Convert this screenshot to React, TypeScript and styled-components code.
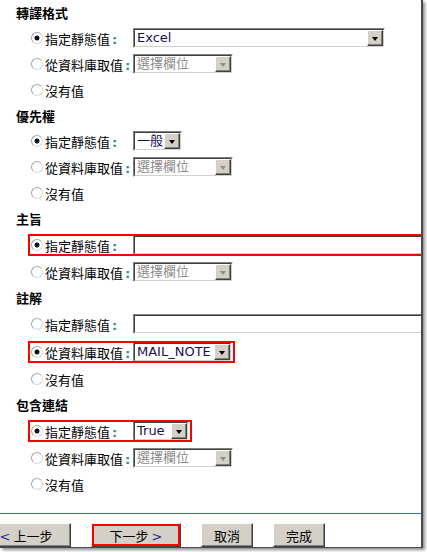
import styled, { createGlobalStyle } from "styled-components";

type Control =
  | { kind: "select"; value: string; width: number }
  | { kind: "pick" }
  | { kind: "text" };

type Option = {
  label: string;
  checked?: boolean;
  mark?: boolean;
  control?: Control;
};

type Section = { title: string; options: Option[] };

const sections: Section[] = [
  {
    title: "轉譯格式",
    options: [
      { label: "指定靜態值", checked: true, control: { kind: "select", value: "Excel", width: 252 } },
      { label: "從資料庫取值", control: { kind: "pick" } },
      { label: "沒有值" },
    ],
  },
  {
    title: "優先權",
    options: [
      { label: "指定靜態值", checked: true, control: { kind: "select", value: "一般", width: 49 } },
      { label: "從資料庫取值", control: { kind: "pick" } },
      { label: "沒有值" },
    ],
  },
  {
    title: "主旨",
    options: [
      { label: "指定靜態值", checked: true, mark: true, control: { kind: "text" } },
      { label: "從資料庫取值", control: { kind: "pick" } },
    ],
  },
  {
    title: "註解",
    options: [
      { label: "指定靜態值", control: { kind: "text" } },
      { label: "從資料庫取值", checked: true, mark: true, control: { kind: "select", value: "MAIL_NOTE", width: 99 } },
      { label: "沒有值" },
    ],
  },
  {
    title: "包含連結",
    options: [
      { label: "指定靜態值", checked: true, mark: true, control: { kind: "select", value: "True", width: 56 } },
      { label: "從資料庫取值", control: { kind: "pick" } },
      { label: "沒有值" },
    ],
  },
];

function Dropdown({ value, width, disabled }: { value: string; width: number; disabled?: boolean }) {
  return (
    <SelectOuter $w={width}>
      <SelectInner>
        <SelectValue $disabled={disabled}>{value}</SelectValue>
        <ArrowButton>
          <Arrow $disabled={disabled} />
        </ArrowButton>
      </SelectInner>
    </SelectOuter>
  );
}

function renderControl(control?: Control) {
  if (!control) return null;
  if (control.kind === "pick") return <Dropdown value="選擇欄位" width={100} disabled />;
  if (control.kind === "select") return <Dropdown value={control.value} width={control.width} />;
  return (
    <TextOuter>
      <TextInner />
    </TextOuter>
  );
}

export default function App() {
  return (
    <>
      <GlobalStyle />
      <Frame>
        <Form>
          {sections.map((section) => (
            <div key={section.title}>
              <Heading>{section.title}</Heading>
              {section.options.map((opt) => (
                <Row key={opt.label} $tall={!!opt.mark || opt.control?.kind === "text"}>
                  <Choice $mark={opt.mark}>
                    <Radio $checked={opt.checked} />
                    {opt.control ? (
                      <Label>
                        {opt.label}
                        <Colon>:</Colon>
                      </Label>
                    ) : (
                      <span>{opt.label}</span>
                    )}
                    {renderControl(opt.control)}
                  </Choice>
                </Row>
              ))}
            </div>
          ))}
        </Form>
        <Footer>
          <Button $w={90}>
            <Chevron>&lt;</Chevron> 上一步
          </Button>
          <Button $w={90} $mark>
            下一步 <Chevron>&gt;</Chevron>
          </Button>
          <Button $w={52}>取消</Button>
          <Button $w={52}>完成</Button>
        </Footer>
      </Frame>
    </>
  );
}

const GlobalStyle = createGlobalStyle`
  html, body {
    margin: 0;
    padding: 0;
    background: #fff;
  }
  body {
    width: 427px;
    height: 552px;
    overflow: hidden;
  }
`;

const Frame = styled.div`
  width: 423px;
  height: 548px;
  box-sizing: border-box;
  border-right: 2px solid #4a4a4a;
  border-bottom: 1px solid #4a4a4a;
  box-shadow: 2px 2px 3px rgba(0, 0, 0, 0.45);
  overflow: hidden;
  display: flex;
  flex-direction: column;
  background: #fff;
  font-family: "Noto Sans CJK TC", "DejaVu Sans", sans-serif;
  font-size: 13px;
  color: #000;
`;

const Form = styled.div`
  flex: 1;
`;

const Heading = styled.div`
  height: 25px;
  line-height: 25px;
  padding-left: 16px;
  font-weight: bold;
`;

const Row = styled.div<{ $tall?: boolean }>`
  height: ${(p) => (p.$tall ? 28 : 26)}px;
  display: flex;
  align-items: center;
  padding-left: 29px;
  white-space: nowrap;
`;

const Choice = styled.div<{ $mark?: boolean }>`
  display: inline-flex;
  align-items: center;
  padding: 0 2px;
  outline: ${(p) => (p.$mark ? "2px solid #f00" : "none")};
  outline-offset: -1px;
`;

const Radio = styled.span<{ $checked?: boolean }>`
  width: 12px;
  height: 12px;
  box-sizing: border-box;
  border-radius: 50%;
  border: 1px solid #a4a4a4;
  border-right-color: #d8d8d8;
  border-bottom-color: #d8d8d8;
  margin-right: 2px;
  background: ${(p) =>
    p.$checked
      ? "radial-gradient(circle, #111 0 2.2px, #fff 2.8px)"
      : "#fff"};
`;

const Label = styled.span`
  width: 88px;
`;

const Colon = styled.span`
  font-family: "DejaVu Sans", sans-serif;
  font-weight: bold;
  color: #2f8c98;
  margin-left: 2px;
`;

const SelectOuter = styled.div<{ $w: number }>`
  width: ${(p) => p.$w}px;
  height: 20px;
  box-sizing: border-box;
  border: 1px solid;
  border-color: #808080 #fff #fff #808080;
  flex-shrink: 0;
`;

const SelectInner = styled.div`
  height: 100%;
  box-sizing: border-box;
  border: 1px solid;
  border-color: #404040 #d4d0c8 #d4d0c8 #404040;
  background: #fff;
  display: flex;
  align-items: center;
`;

const SelectValue = styled.span<{ $disabled?: boolean }>`
  flex: 1;
  padding-left: 2px;
  overflow: hidden;
  font-family: "DejaVu Sans", "Noto Sans CJK TC", sans-serif;
  font-size: 13px;
  line-height: 16px;
  color: ${(p) => (p.$disabled ? "#8c8c8c" : "#1a1050")};
`;

const ArrowButton = styled.span`
  width: 16px;
  height: 100%;
  box-sizing: border-box;
  background: #d4d0c8;
  border: 1px solid;
  border-color: #fff #404040 #404040 #fff;
  box-shadow: inset -1px -1px 0 #808080;
  display: flex;
  align-items: center;
  justify-content: center;
`;

const Arrow = styled.span<{ $disabled?: boolean }>`
  width: 0;
  height: 0;
  border-left: 3.5px solid transparent;
  border-right: 3.5px solid transparent;
  border-top: 4px solid ${(p) => (p.$disabled ? "#8c8c8c" : "#000")};
  margin-top: 1px;
`;

const TextOuter = styled.div`
  width: 320px;
  height: 20px;
  box-sizing: border-box;
  border: 1px solid;
  border-color: #808080 #fff #fff #808080;
  flex-shrink: 0;
`;

const TextInner = styled.div`
  height: 100%;
  box-sizing: border-box;
  border: 1px solid;
  border-color: #404040 #d4d0c8 #d4d0c8 #404040;
  background: #fff;
`;

const Footer = styled.div`
  border-top: 1px solid #3a6fcc;
  padding-top: 9px;
  display: flex;
  gap: 20px;
  margin-left: -19px;
`;

const Button = styled.button<{ $w: number; $mark?: boolean }>`
  width: ${(p) => p.$w}px;
  height: 24px;
  box-sizing: border-box;
  flex-shrink: 0;
  padding: 0;
  background: #d4d0c8;
  border: 1px solid;
  border-color: #fff #404040 #404040 #fff;
  box-shadow: inset -1px -1px 0 #808080;
  font-family: "Noto Sans CJK TC", sans-serif;
  font-size: 13px;
  color: #000;
  outline: ${(p) => (p.$mark ? "2px solid #f00" : "none")};
  outline-offset: -3px;
`;

const Chevron = styled.span`
  font-family: "DejaVu Sans", sans-serif;
  color: #1c2c8c;
`;
